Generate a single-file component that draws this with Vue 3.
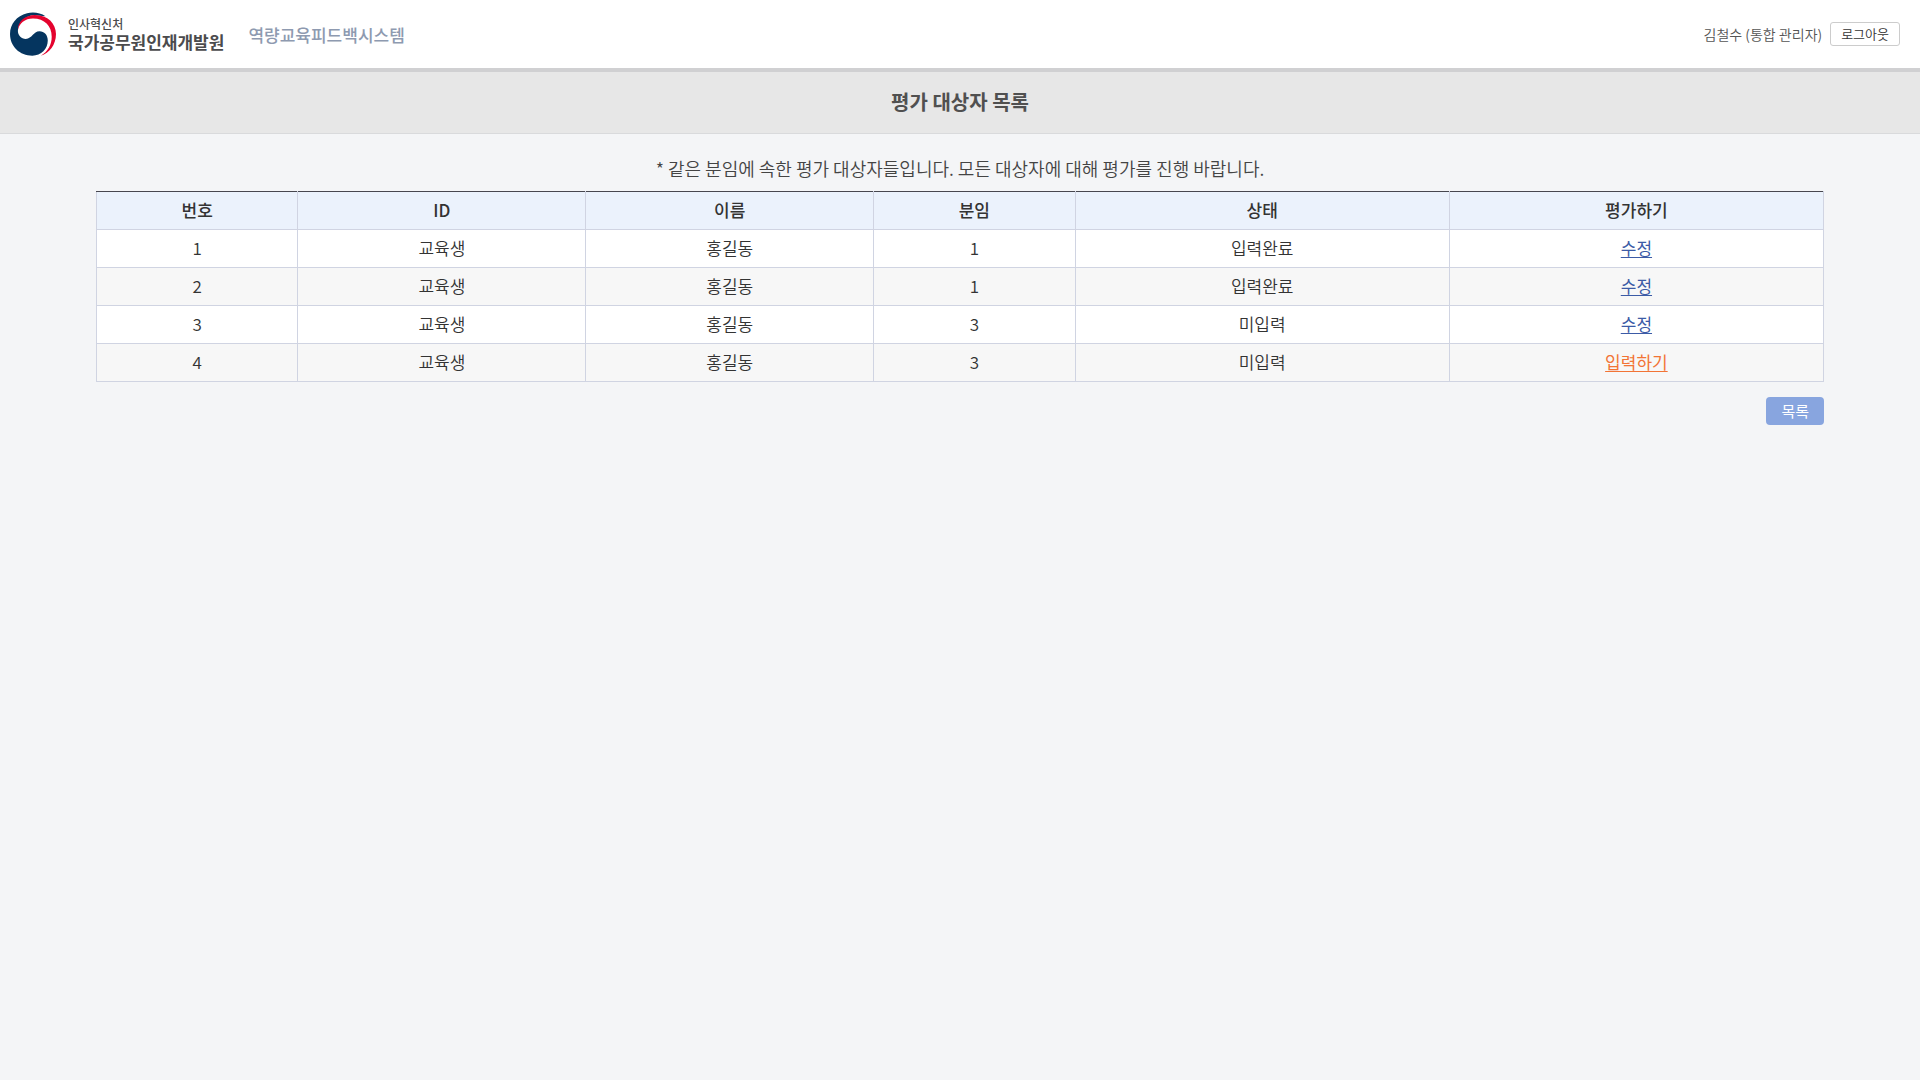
<script setup>
const columns = ['번호', 'ID', '이름', '분임', '상태', '평가하기']

const trainees = [
  { no: 1, id: '교육생', name: '홍길동', group: 1, status: '입력완료', action: '수정' },
  { no: 2, id: '교육생', name: '홍길동', group: 1, status: '입력완료', action: '수정' },
  { no: 3, id: '교육생', name: '홍길동', group: 3, status: '미입력', action: '수정' },
  { no: 4, id: '교육생', name: '홍길동', group: 3, status: '미입력', action: '입력하기', pending: true },
]
</script>

<template>
  <header class="topbar">
    <a class="brand" href="#">
      <svg class="emblem" viewBox="30 35 140 134" aria-hidden="true">
        <path
          fill="#05355f"
          d="M138 48C122 37 100 34 82 39C50 47 30 72 30 102C30 140 60 168 98 168C125 168 145 148 145 122C145 105 134 94 120 94C100 94 98 117 78 117C64 117 54 106 54 93C54 70 75 45 105 45Z"
        />
        <path
          fill="#e4032e"
          d="M54 90C53 64 76 44 106 44C145 44 170 70 170 102C170 135 150 160 124 168C145 155 157 135 157 110C157 78 135 55 100 55C75 55 58 70 54 90Z"
        />
      </svg>
      <span class="agency">
        <span class="ministry">인사혁신처</span>
        <strong class="institute">국가공무원인재개발원</strong>
      </span>
    </a>
    <span class="system">역량교육피드백시스템</span>
    <span class="user">김철수 (통합 관리자)</span>
    <button type="button" class="logout">로그아웃</button>
  </header>

  <h1 class="title">평가 대상자 목록</h1>

  <main class="content">
    <p class="notice">* 같은 분임에 속한 평가 대상자들입니다. 모든 대상자에 대해 평가를 진행 바랍니다.</p>
    <table class="list">
      <colgroup>
        <col class="narrow" />
        <col class="medium" />
        <col class="medium" />
        <col class="narrow" />
        <col class="wide" />
        <col class="wide" />
      </colgroup>
      <thead>
        <tr>
          <th v-for="label in columns" :key="label" scope="col">{{ label }}</th>
        </tr>
      </thead>
      <tbody>
        <tr v-for="row in trainees" :key="row.no">
          <td>{{ row.no }}</td>
          <td>{{ row.id }}</td>
          <td>{{ row.name }}</td>
          <td>{{ row.group }}</td>
          <td>{{ row.status }}</td>
          <td><a href="#" class="action" :class="{ pending: row.pending }">{{ row.action }}</a></td>
        </tr>
      </tbody>
    </table>
    <div class="buttons">
      <button type="button" class="back">목록</button>
    </div>
  </main>
</template>

<style>
body {
  margin: 0;
  background: #f4f5f7;
  color: #333;
  font-family: 'Noto Sans CJK KR', sans-serif;
  font-size: 17px;
  font-weight: 350;
}
</style>

<style scoped>
.topbar {
  display: flex;
  align-items: center;
  height: 68px;
  padding: 0 20px 0 10px;
  background: #fff;
  border-bottom: 4px solid #d0d0d2;
}

.brand {
  display: flex;
  align-items: center;
  gap: 12px;
  color: #4b4b4d;
  text-decoration: none;
}

.emblem {
  width: 46px;
  height: 44px;
}

.agency {
  display: flex;
  flex-direction: column;
}

.ministry {
  font-size: 12px;
  font-weight: 500;
  line-height: 16px;
}

.institute {
  font-size: 17px;
  font-weight: 700;
  line-height: 20px;
}

.system {
  margin-left: 24px;
  color: #8e9ab0;
  font-weight: 500;
}

.user {
  margin-left: auto;
  color: #555;
  font-size: 14px;
}

.logout {
  height: 24px;
  margin-left: 8px;
  padding: 0 10px;
  border: 1px solid #ccc;
  border-radius: 3px;
  background: #fff;
  color: #333;
  font-family: inherit;
  font-size: 13px;
  font-weight: 350;
  line-height: 20px;
}

.title {
  margin: 0;
  padding-bottom: 2px;
  background: #e7e7e7;
  border-bottom: 1px solid #d9dadc;
  color: #505050;
  font-size: 20px;
  font-weight: 700;
  line-height: 59px;
  text-align: center;
}

.content {
  padding: 22px 5%;
}

.notice {
  margin: 0 0 10px;
  color: #444;
  font-size: 18px;
  line-height: 25px;
  text-align: center;
}

.list {
  width: 100%;
  table-layout: fixed;
  border-collapse: collapse;
  text-align: center;
}

.narrow {
  width: 7%;
}

.medium {
  width: 10%;
}

.wide {
  width: 13%;
}

.list th,
.list td {
  height: 35px;
  padding: 0 0 2px;
  border: 1px solid #d0d4e2;
  line-height: 24px;
}

.list th {
  border-top-color: #47474f;
  background: #ebf2fc;
  font-weight: 500;
}

.list td {
  background: #fff;
}

.list tr:nth-child(even) td {
  background: #f7f7f7;
}

.action {
  color: #3c5ba6;
  font-weight: 400;
  text-underline-offset: 2px;
}

.pending {
  color: #f27435;
}

.buttons {
  display: flex;
  justify-content: flex-end;
  margin-top: 15px;
}

.back {
  height: 28px;
  padding: 0 15px;
  border: 0;
  border-radius: 4px;
  background: #88a5df;
  color: #fff;
  font-family: inherit;
  font-size: 15px;
  line-height: 26px;
}
</style>
